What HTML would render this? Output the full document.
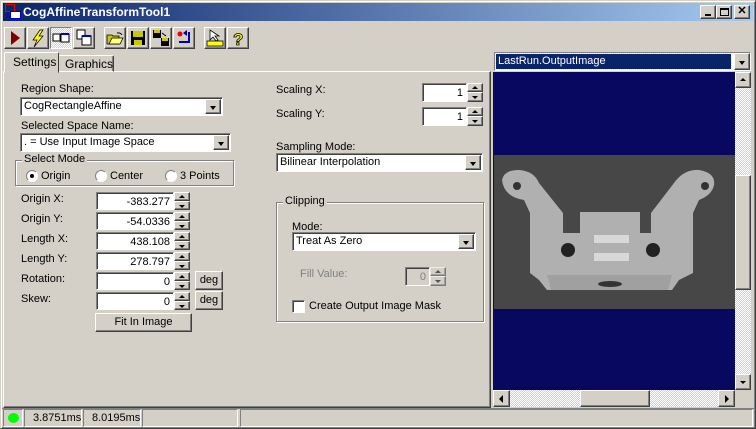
<!DOCTYPE html>
<html><head><meta charset="utf-8"><style>
*{box-sizing:border-box;margin:0;padding:0}
body{width:756px;height:429px;background:#d4d0c8;font-family:"Liberation Sans",sans-serif;font-size:11px;color:#000;position:relative;overflow:hidden}
.a{position:absolute}
.raised{background:#d4d0c8;border:1px solid;border-color:#fff #404040 #404040 #fff;box-shadow:inset -1px -1px 0 #808080}
.sunk{background:#fff;border:1px solid;border-color:#808080 #fff #fff #808080;box-shadow:inset 1px 1px 0 #404040}
.lbl{position:absolute;white-space:nowrap}
.inp{position:absolute;text-align:right;padding:3px 3px 0 0;line-height:13px}
.combo{position:absolute;padding:2px 0 0 3px;line-height:13px}
.dd{position:absolute;right:1px;top:1px;bottom:1px;width:16px}
.dd:after,.spu:after,.spd:after{content:"";position:absolute;left:50%;top:50%;border:3px solid transparent;margin-left:-3px}
.dd:after{border-top:4px solid #000;margin-top:-1px;border-bottom:0}
.spu:after{border-bottom:3px solid #000;border-top:0;margin-top:-2px}
.spd:after{border-top:3px solid #000;border-bottom:0;margin-top:-1px}
.spu,.spd{position:absolute;width:16px;height:9px}
.grp{position:absolute;border:1px solid #808080;box-shadow:1px 1px 0 #fff,inset 1px 1px 0 #fff}
.grp span{position:absolute;top:-8px;left:6px;background:#d4d0c8;padding:0 2px}
.tb{position:absolute;top:27px;width:22px;height:22px}
.radio{position:absolute;width:12px;height:12px;border-radius:50%;background:#fff;border:1px solid;border-color:#808080 #fff #fff #808080}
</style></head><body>
<div class="a" style="left:0;top:0;width:756px;height:429px;border:1px solid;border-color:#d4d0c8 #404040 #404040 #d4d0c8;box-shadow:inset 1px 1px 0 #fff,inset -1px -1px 0 #808080"></div>
<div class="a" style="left:3px;top:3px;width:750px;height:18px;background:linear-gradient(90deg,#0a246a,#a6caf0)"></div>
<svg class="a" style="left:5px;top:4px" width="16" height="16"><rect x="0.5" y="0.5" width="9" height="7" fill="none" stroke="#e00" /><rect x="5.5" y="7.5" width="10" height="7" fill="#fff" stroke="#00c"/><path d="M3 8v5h3" stroke="#00c" fill="none"/></svg>
<div class="lbl" style="left:23px;top:5px;color:#fff;font-weight:bold;font-size:12px">CogAffineTransformTool1</div>
<div class="a raised" style="left:700px;top:5px;width:16px;height:14px"><div class="a" style="left:4px;top:8px;width:6px;height:2px;background:#000"></div></div>
<div class="a raised" style="left:716px;top:5px;width:16px;height:14px"><div class="a" style="left:3px;top:2px;width:9px;height:8px;border:1px solid #000;border-top-width:2px"></div></div>
<div class="a raised" style="left:734px;top:5px;width:16px;height:14px;font-size:11px;font-weight:bold;text-align:center;line-height:11px">✕</div>
<div class="tb raised" style="left:4px"><svg width="20" height="20"><path d="M6 3l9 7-9 7z" fill="#800000"/></svg></div>
<div class="tb raised" style="left:27px"><svg width="20" height="20"><path d="M12 2l-7 10h4l-3 7 9-11h-4l4-6z" fill="#ff0" stroke="#000" stroke-width=".7"/></svg></div>
<div class="tb" style="left:50px;background:repeating-conic-gradient(#fff 0 25%,#d4d0c8 0 50%) 0 0/2px 2px;border:1px solid;border-color:#808080 #fff #fff #808080"><svg width="20" height="20"><rect x="2" y="6" width="7" height="7" fill="#fff" stroke="#000"/><rect x="10" y="6" width="8" height="8" fill="#fff" stroke="#000"/><rect x="10" y="5" width="8" height="2" fill="#00c"/></svg></div>
<div class="tb raised" style="left:73px"><svg width="20" height="20"><rect x="3" y="2" width="8" height="9" fill="#fff" stroke="#000"/><rect x="8" y="8" width="9" height="9" fill="#fff" stroke="#000"/><rect x="8" y="7" width="9" height="2" fill="#00c"/></svg></div>
<div class="tb raised" style="left:104px"><svg width="20" height="20"><path d="M2 7h5l1 1h6v8H2z" fill="#c8c800" stroke="#000" stroke-width=".8"/><path d="M4 16l3-6h11l-3 6z" fill="#ffff80" stroke="#000" stroke-width=".8"/><path d="M12 5a4 3 0 0 1 5 2" stroke="#000" fill="none"/></svg></div>
<div class="tb raised" style="left:127px"><svg width="20" height="20"><rect x="3" y="3" width="14" height="14" fill="#000"/><rect x="5" y="3" width="10" height="6" fill="#c8c800"/><rect x="6" y="12" width="8" height="5" fill="#c8c800"/></svg></div>
<div class="tb raised" style="left:150px"><svg width="20" height="20"><rect x="2" y="2" width="8" height="8" fill="#000"/><rect x="10" y="10" width="8" height="8" fill="#000"/><rect x="3" y="2" width="6" height="3" fill="#c8c800"/><rect x="11" y="10" width="6" height="3" fill="#c8c800"/><path d="M11 5l4 3" stroke="#000"/></svg></div>
<div class="tb raised" style="left:173px"><svg width="20" height="20"><circle cx="6" cy="6" r="2.5" fill="#e00"/><path d="M15 4v10H5" stroke="#00a" stroke-width="2" fill="none"/><path d="M13 2l-4 3 4 3z" fill="#00a"/></svg></div>
<div class="tb raised" style="left:204px"><svg width="20" height="20"><path d="M5 2v10l3-3 3 4 2-1-3-4h4z" fill="#fff" stroke="#000" stroke-width=".8"/><rect x="2" y="13" width="16" height="5" fill="#ff0" stroke="#000" stroke-width=".8"/></svg></div>
<div class="tb raised" style="left:227px"><svg width="20" height="20"><text x="5" y="17" font-size="17" font-weight="bold" fill="#ff0" stroke="#000" stroke-width=".8" font-family="Liberation Sans">?</text></svg></div>
<div class="a" style="left:3px;top:71px;width:488px;height:337px;border:1px solid;border-color:#fff #404040 #404040 #fff;box-shadow:inset -1px -1px 0 #808080"></div>
<div class="a" style="left:58px;top:55px;width:56px;height:17px;border:1px solid;border-color:#fff #404040 transparent #fff;box-shadow:inset -1px 0 0 #808080;border-radius:2px 2px 0 0"></div>
<div class="lbl" style="left:65px;top:57px;font-size:12px">Graphics</div>
<div class="a" style="left:4px;top:52px;width:55px;height:21px;background:#d4d0c8;border:1px solid;border-color:#fff #404040 transparent #fff;border-radius:2px 2px 0 0"></div>
<div class="lbl" style="left:13px;top:55px;font-size:12px">Settings</div>
<div class="lbl" style="left:21px;top:83px">Region Shape:</div>
<div class="combo sunk" style="left:20px;top:97px;width:203px;height:19px">CogRectangleAffine<div class="dd raised"></div></div>
<div class="lbl" style="left:21px;top:120px">Selected Space Name:</div>
<div class="combo sunk" style="left:20px;top:133px;width:211px;height:19px">. = Use Input Image Space<div class="dd raised"></div></div>
<div class="grp" style="left:15px;top:160px;width:219px;height:26px"><span>Select Mode</span></div>
<div class="radio" style="left:26px;top:170px"><div class="a" style="left:3px;top:3px;width:4px;height:4px;border-radius:50%;background:#000"></div></div>
<div class="lbl" style="left:41px;top:170px">Origin</div>
<div class="radio" style="left:95px;top:170px"></div><div class="lbl" style="left:110px;top:170px">Center</div>
<div class="radio" style="left:165px;top:170px"></div><div class="lbl" style="left:180px;top:170px">3 Points</div>
<div class="lbl" style="left:21px;top:193px">Origin X:</div>
<div class="lbl" style="left:21px;top:213px">Origin Y:</div>
<div class="lbl" style="left:21px;top:233px">Length X:</div>
<div class="lbl" style="left:21px;top:253px">Length Y:</div>
<div class="lbl" style="left:21px;top:273px">Rotation:</div>
<div class="lbl" style="left:21px;top:293px">Skew:</div>
<div class="inp sunk" style="left:96px;top:192px;width:78px;height:18px">-383.277</div>
<div class="inp sunk" style="left:96px;top:212px;width:78px;height:18px">-54.0336</div>
<div class="inp sunk" style="left:96px;top:232px;width:78px;height:18px">438.108</div>
<div class="inp sunk" style="left:96px;top:252px;width:78px;height:18px">278.797</div>
<div class="inp sunk" style="left:96px;top:272px;width:78px;height:18px">0</div>
<div class="inp sunk" style="left:96px;top:292px;width:78px;height:18px">0</div>
<div class="spu raised" style="left:174px;top:192px"></div><div class="spd raised" style="left:174px;top:201px"></div>
<div class="spu raised" style="left:174px;top:212px"></div><div class="spd raised" style="left:174px;top:221px"></div>
<div class="spu raised" style="left:174px;top:232px"></div><div class="spd raised" style="left:174px;top:241px"></div>
<div class="spu raised" style="left:174px;top:252px"></div><div class="spd raised" style="left:174px;top:261px"></div>
<div class="spu raised" style="left:174px;top:272px"></div><div class="spd raised" style="left:174px;top:281px"></div>
<div class="spu raised" style="left:174px;top:292px"></div><div class="spd raised" style="left:174px;top:301px"></div>
<div class="a raised" style="left:195px;top:271px;width:28px;height:19px;text-align:center;line-height:16px">deg</div>
<div class="a raised" style="left:195px;top:291px;width:28px;height:19px;text-align:center;line-height:16px">deg</div>
<div class="a raised" style="left:95px;top:313px;width:97px;height:19px;text-align:center;line-height:16px">Fit In Image</div>
<div class="lbl" style="left:276px;top:84px">Scaling X:</div>
<div class="lbl" style="left:276px;top:108px">Scaling Y:</div>
<div class="inp sunk" style="left:422px;top:83px;width:45px;height:19px">1</div>
<div class="inp sunk" style="left:422px;top:107px;width:45px;height:19px">1</div>
<div class="spu raised" style="left:467px;top:83px"></div><div class="spd raised" style="left:467px;top:92px;height:10px"></div>
<div class="spu raised" style="left:467px;top:107px"></div><div class="spd raised" style="left:467px;top:116px;height:10px"></div>
<div class="lbl" style="left:276px;top:141px">Sampling Mode:</div>
<div class="combo sunk" style="left:276px;top:153px;width:207px;height:19px">Bilinear Interpolation<div class="dd raised"></div></div>
<div class="grp" style="left:276px;top:202px;width:208px;height:120px"><span>Clipping</span></div>
<div class="lbl" style="left:292px;top:221px">Mode:</div>
<div class="combo sunk" style="left:292px;top:232px;width:184px;height:19px">Treat As Zero<div class="dd raised"></div></div>
<div class="lbl" style="left:300px;top:268px;color:#808080">Fill Value:</div>
<div class="inp" style="left:405px;top:267px;width:25px;height:19px;color:#808080;background:#d4d0c8;border:1px solid;border-color:#808080 #fff #fff #808080;box-shadow:inset 1px 1px 0 #404040">0</div>
<div class="spu raised" style="left:430px;top:267px;opacity:.6"></div><div class="spd raised" style="left:430px;top:276px;height:10px;opacity:.6"></div>
<div class="a sunk" style="left:292px;top:300px;width:13px;height:13px"></div>
<div class="lbl" style="left:309px;top:300px">Create Output Image Mask</div>
<div class="a" style="left:494px;top:52px;width:257px;height:19px;background:#fff;border:1px solid;border-color:#808080 #fff #fff #808080"></div>
<div class="a" style="left:496px;top:54px;width:235px;height:15px;background:#0a246a;outline:1px dotted #ff0;color:#fff;padding-left:2px;line-height:15px">LastRun.OutputImage</div>
<div class="dd raised a" style="left:734px;top:53px;width:16px;height:17px;position:absolute"></div>
<div class="a" style="left:493px;top:72px;width:242px;height:318px;background:#080860"></div>
<svg class="a" style="left:494px;top:155px" width="241" height="154">
<rect width="241" height="154" fill="#474747"/>
<path d="M8 25Q10 15 25 15Q40 16 45 28L69 58L69 78L86 78L86 57L146 57L146 78L157 78L157 58L180 28Q190 14 205 15Q222 18 220 30Q218 40 205 45L199 58L199 118L185 125L178 135L53 135L45 125L36 118L36 58L30 45Q10 42 8 25Z" fill="#b0b0b0"/>
<path d="M53 120h125l-4 15h-117z" fill="#a0a0a0"/>
<circle cx="23" cy="31" r="4" fill="#333"/><circle cx="211" cy="31" r="4" fill="#333"/>
<circle cx="74" cy="95" r="7" fill="#222"/><circle cx="159" cy="95" r="7" fill="#222"/>
<rect x="100" y="80" width="35" height="8" fill="#d8d8d8"/><rect x="100" y="98" width="35" height="8" fill="#d8d8d8"/>
<ellipse cx="116" cy="129" rx="12" ry="3" fill="#333"/>
</svg>
<div class="a" style="left:735px;top:72px;width:16px;height:318px;background:repeating-conic-gradient(#fff 0 25%,#d4d0c8 0 50%) 0 0/2px 2px"></div>
<div class="spu raised" style="left:735px;top:72px;height:16px"></div>
<div class="a raised" style="left:735px;top:175px;width:16px;height:115px"></div>
<div class="spd raised" style="left:735px;top:374px;height:16px"></div>
<div class="a" style="left:493px;top:390px;width:242px;height:17px;background:repeating-conic-gradient(#fff 0 25%,#d4d0c8 0 50%) 0 0/2px 2px"></div>
<div class="a raised" style="left:493px;top:390px;width:17px;height:17px"><div class="a" style="left:5px;top:4px;border:4px solid transparent;border-right:4px solid #000;border-left:0"></div></div>
<div class="a raised" style="left:580px;top:390px;width:70px;height:17px"></div>
<div class="a raised" style="left:718px;top:390px;width:17px;height:17px"><div class="a" style="left:6px;top:4px;border:4px solid transparent;border-left:4px solid #000;border-right:0"></div></div>
<div class="a" style="left:2px;top:408px;width:752px;height:1px;background:#808080"></div>
<div class="a" style="left:3px;top:409px;width:20px;height:18px;border:1px solid;border-color:#808080 #fff #fff #808080"><div class="a" style="left:4px;top:3px;width:11px;height:10px;border-radius:50%;background:#0f0"></div></div>
<div class="a" style="left:24px;top:409px;width:58px;height:18px;border:1px solid;border-color:#808080 #fff #fff #808080;padding:2px 0 0 8px">3.8751ms</div>
<div class="a" style="left:83px;top:409px;width:58px;height:18px;border:1px solid;border-color:#808080 #fff #fff #808080;padding:2px 0 0 8px">8.0195ms</div>
<div class="a" style="left:142px;top:409px;width:96px;height:18px;border:1px solid;border-color:#808080 #fff #fff #808080"></div>
<div class="a" style="left:240px;top:409px;width:513px;height:18px;border:1px solid;border-color:#808080 #fff #fff #808080"></div>
</body></html>
